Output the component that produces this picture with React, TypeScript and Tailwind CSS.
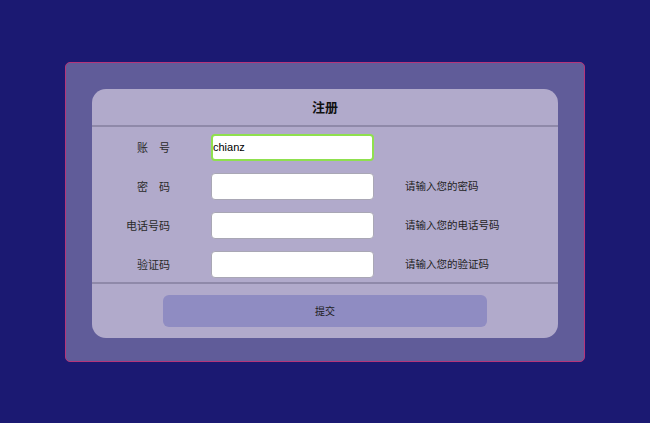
export default function App() {
  const rows = [
    { label: "账　号", value: "chianz", hint: "", focus: true },
    { label: "密　码", value: "", hint: "请输入您的密码", focus: false },
    { label: "电话号码", value: "", hint: "请输入您的电话号码", focus: false },
    { label: "验证码", value: "", hint: "请输入您的验证码", focus: false },
  ];

  return (
    <div
      className="w-[650px] h-[423px] bg-[#1b1972] flex items-center justify-center"
      style={{ fontFamily: '"Noto Sans CJK SC", "Liberation Sans", sans-serif' }}
    >
      <div className="w-[520px] h-[300px] bg-[#605c99] border border-[#b5357a] rounded-[5px] px-[26px] pt-[26px]">
        <div className="w-[466px] h-[249px] bg-[#b1aacb] rounded-[14px] flex flex-col">
          {/* 标题 */}
          <div className="h-[38px] flex items-center justify-center border-b-2 border-[#8f89a9]">
            <span className="text-[13px] font-bold text-[#111]">注册</span>
          </div>

          {/* 表单 */}
          <div className="flex flex-col gap-[12px] pt-[7px] pb-[4px] border-b-2 border-[#8f89a9]">
            {rows.map((r) => (
              <div key={r.label} className="flex items-center h-[27px]">
                <div className="w-[78px] text-right text-[11px] text-[#2a2a2a] leading-none">{r.label}</div>
                <input
                  defaultValue={r.value}
                  className={
                    r.focus
                      ? "ml-[41px] w-[163px] h-[27px] bg-white rounded-[4px] border-2 border-[#8fe04e] font-['Liberation_Sans'] text-[11px] text-black px-0 outline-none"
                      : "ml-[41px] w-[163px] h-[27px] bg-white rounded-[4px] border border-[#a9a7b5] text-[11px] outline-none"
                  }
                />
                <div className="ml-[31px] text-[10.5px] text-[#1e1e1e] leading-none">{r.hint}</div>
              </div>
            ))}
          </div>

          {/* 按钮 */}
          <div className="flex justify-center pt-[11px]">
            <button className="w-[324px] h-[32px] bg-[#8f8cc2] rounded-[6px] text-[10px] text-[#1e1e1e]">
              提交
            </button>
          </div>
        </div>
      </div>
    </div>
  );
}
